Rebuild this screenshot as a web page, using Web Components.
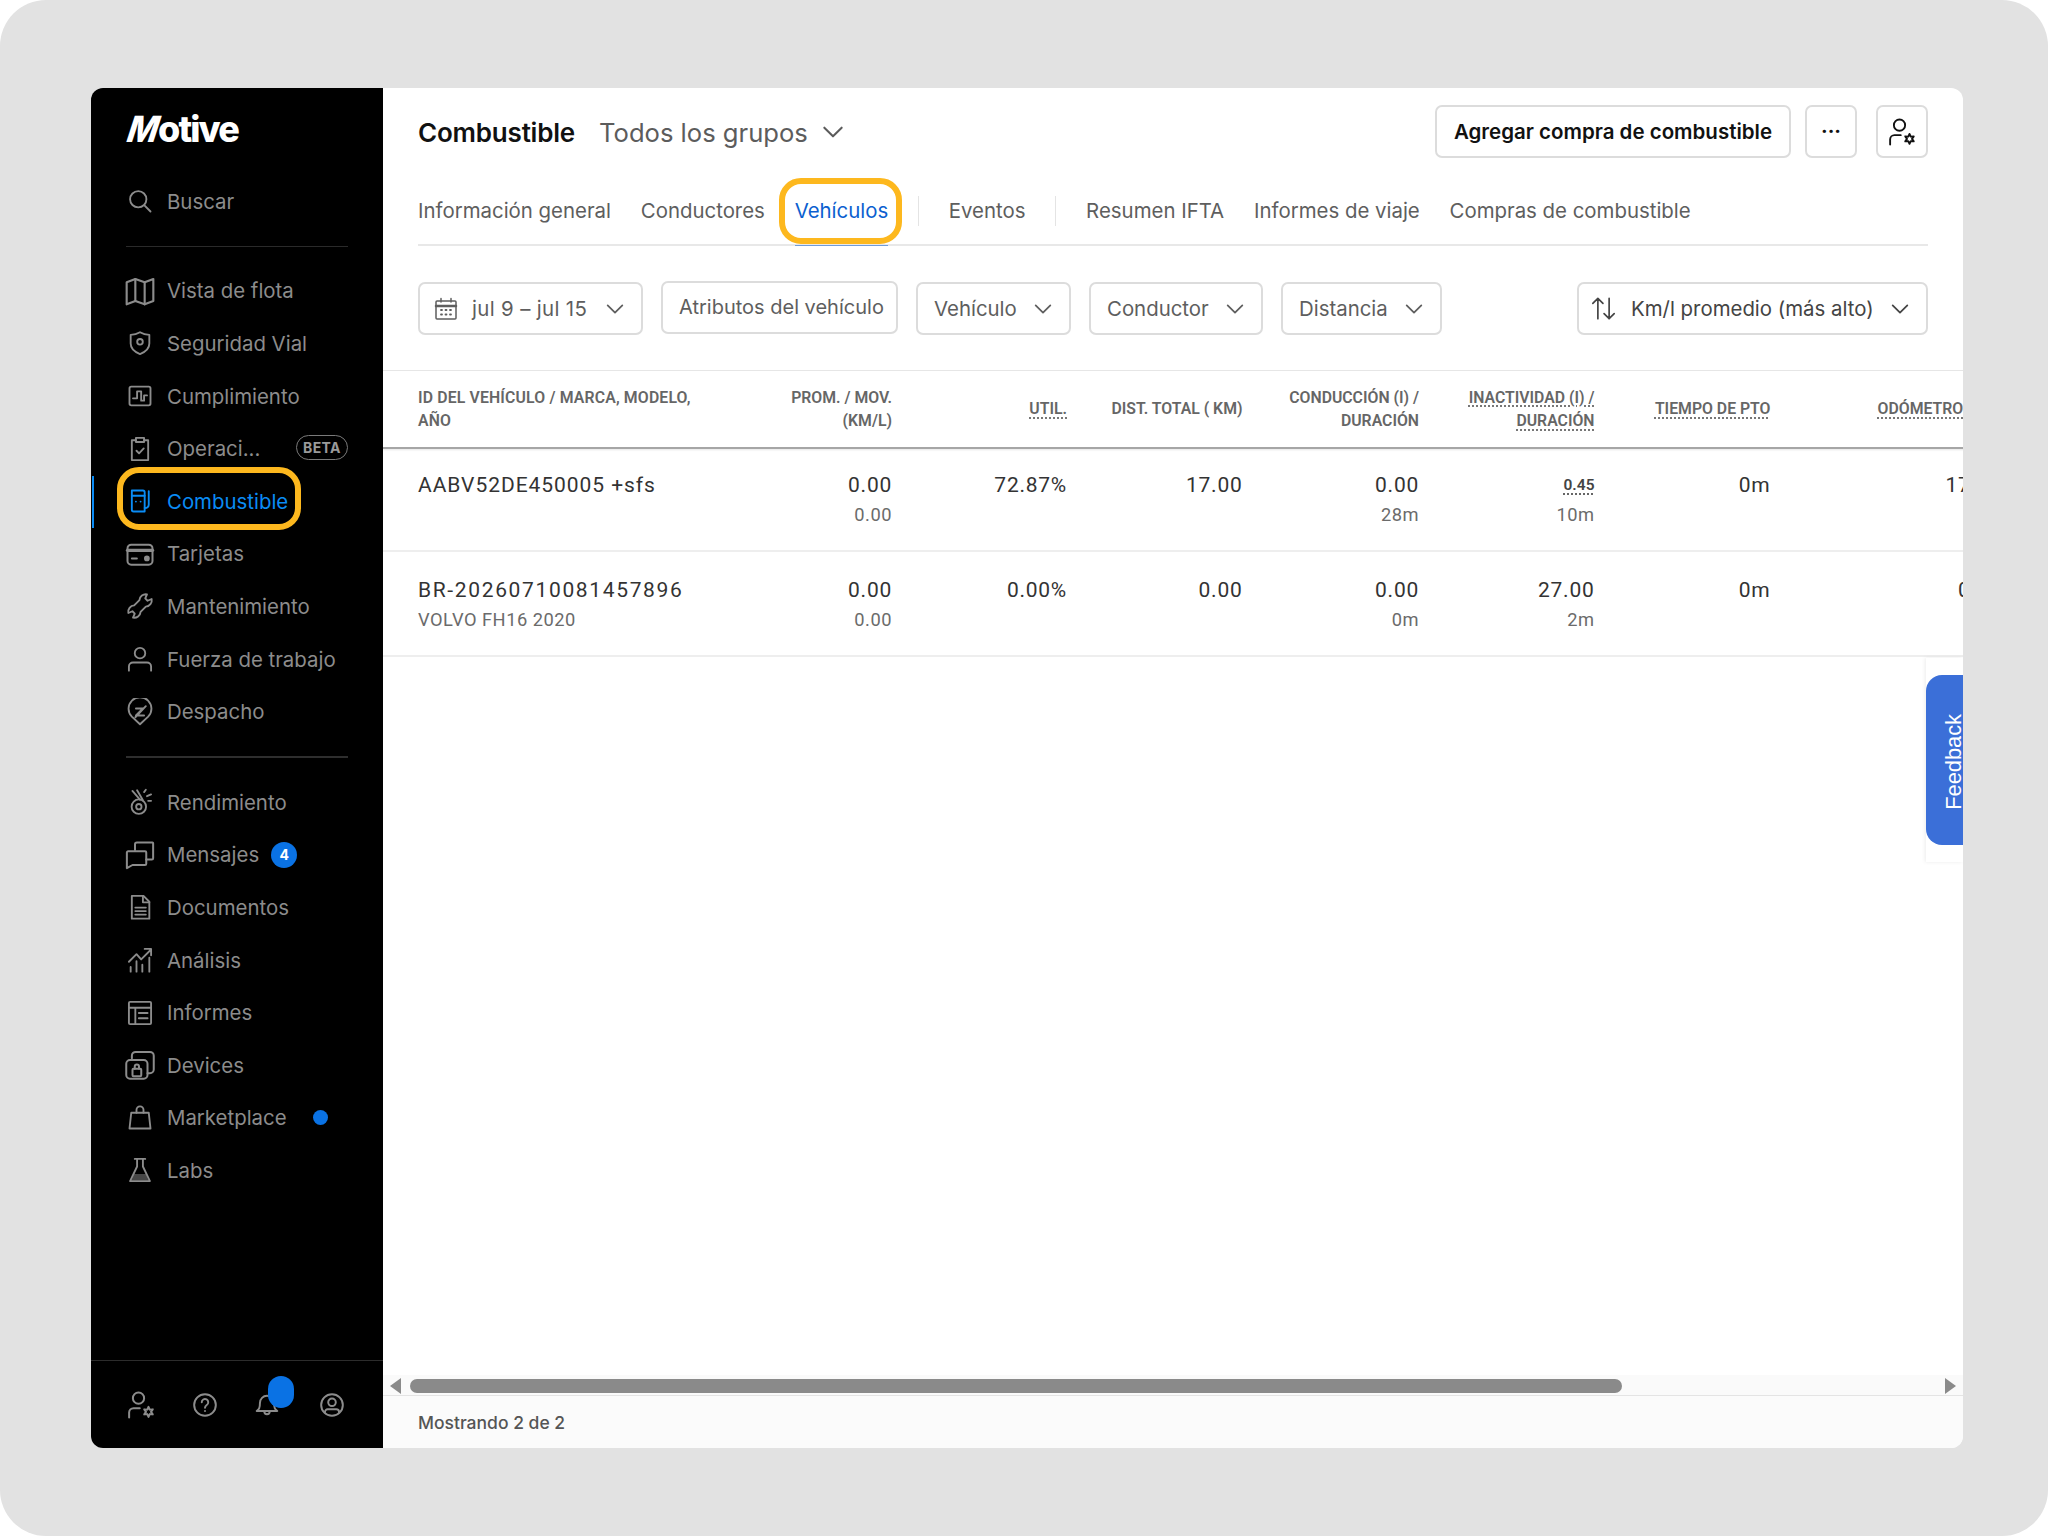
<!DOCTYPE html>
<html lang="es">
<head>
<meta charset="utf-8">
<title>Combustible</title>
<style>
  html, body { margin: 0; padding: 0; background: #fff; }
  body { font-family: Inter, "Liberation Sans", sans-serif; }
</style>
</head>
<body>
<mt-frame>
  <mt-sidebar slot="side">
    <mt-nav-item slot="top" icon="search" label="Buscar"></mt-nav-item>

    <mt-nav-item icon="map" label="Vista de flota" size="32"></mt-nav-item>
    <mt-nav-item icon="shield" label="Seguridad Vial"></mt-nav-item>
    <mt-nav-item icon="compliance" label="Cumplimiento"></mt-nav-item>
    <mt-nav-item icon="clipboard" label="Operaci..."><mt-beta></mt-beta></mt-nav-item>
    <mt-nav-item icon="fuel" label="Combustible" active marked></mt-nav-item>
    <mt-nav-item icon="card" label="Tarjetas" size="30"></mt-nav-item>
    <mt-nav-item icon="wrench" label="Mantenimiento"></mt-nav-item>
    <mt-nav-item icon="person" label="Fuerza de trabajo"></mt-nav-item>
    <mt-nav-item icon="dispatch" label="Despacho"></mt-nav-item>

    <mt-nav-item slot="second" icon="medal" label="Rendimiento"></mt-nav-item>
    <mt-nav-item slot="second" icon="messages" label="Mensajes" size="30"><mt-count>4</mt-count></mt-nav-item>
    <mt-nav-item slot="second" icon="doc" label="Documentos"></mt-nav-item>
    <mt-nav-item slot="second" icon="chart" label="Análisis"></mt-nav-item>
    <mt-nav-item slot="second" icon="report" label="Informes"></mt-nav-item>
    <mt-nav-item slot="second" icon="device" label="Devices" size="30"></mt-nav-item>
    <mt-nav-item slot="second" icon="bag" label="Marketplace"><mt-dot></mt-dot></mt-nav-item>
    <mt-nav-item slot="second" icon="flask" label="Labs"></mt-nav-item>
  </mt-sidebar>

  <mt-main slot="main">
    <mt-header slot="head"></mt-header>
    <mt-tabs slot="head">
      <mt-tab>Información general</mt-tab>
      <mt-tab>Conductores</mt-tab>
      <mt-tab active>Vehículos</mt-tab>
      <mt-sep></mt-sep>
      <mt-tab>Eventos</mt-tab>
      <mt-sep></mt-sep>
      <mt-tab>Resumen IFTA</mt-tab>
      <mt-tab>Informes de viaje</mt-tab>
      <mt-tab>Compras de combustible</mt-tab>
    </mt-tabs>
    <mt-filters slot="head">
      <mt-filter icon="calendar" w="225" spacing=".35">jul 9 – jul 15</mt-filter>
      <mt-filter plain w="237">Atributos del vehículo</mt-filter>
      <mt-filter w="155">Vehículo</mt-filter>
      <mt-filter w="174">Conductor</mt-filter>
      <mt-filter w="161">Distancia</mt-filter>
      <mt-filter class="sort" icon="sort" w="351" dark>Km/l promedio (más alto)</mt-filter>
    </mt-filters>

    <mt-table>
      <mt-row slot="head" head>
        <mt-th left>ID del vehículo / marca, modelo,<br>año</mt-th>
        <mt-th>Prom. / Mov.<br>(km/l)</mt-th>
        <mt-th dotted>Util.</mt-th>
        <mt-th>Dist. Total ( km)</mt-th>
        <mt-th>Conducción (I) /<br>Duración</mt-th>
        <mt-th dotted>Inactividad (I) /<br>Duración</mt-th>
        <mt-th dotted>Tiempo de PTO</mt-th>
        <mt-th dotted>Odómetro (km)</mt-th>
      </mt-row>
      <mt-row first>
        <mt-cell left main="AABV52DE450005 +sfs" spacing=".95"></mt-cell>
        <mt-cell main="0.00" sub="0.00"></mt-cell>
        <mt-cell main="72.87%"></mt-cell>
        <mt-cell main="17.00"></mt-cell>
        <mt-cell main="0.00" sub="28m"></mt-cell>
        <mt-cell main="0.45" sub="10m" small></mt-cell>
        <mt-cell main="0m"></mt-cell>
        <mt-cell main="17.00"></mt-cell>
      </mt-row>
      <mt-row>
        <mt-cell left main="BR-20260710081457896" sub="VOLVO FH16 2020" spacing="1.65"></mt-cell>
        <mt-cell main="0.00" sub="0.00"></mt-cell>
        <mt-cell main="0.00%"></mt-cell>
        <mt-cell main="0.00"></mt-cell>
        <mt-cell main="0.00" sub="0m"></mt-cell>
        <mt-cell main="27.00" sub="2m"></mt-cell>
        <mt-cell main="0m"></mt-cell>
        <mt-cell main="0.00"></mt-cell>
      </mt-row>
      <mt-feedback slot="over"></mt-feedback>
    </mt-table>

    <mt-scrollbar></mt-scrollbar>
    <mt-footer>Mostrando 2 de 2</mt-footer>
  </mt-main>
</mt-frame>

<script>
/**
 * Line icons, all of them on a 24 x 24 grid. Stroke and size come from the element using them.
 */
const ICONS = {
  search: '<circle cx="10.5" cy="10.5" r="7"/><path d="M15.8 15.8 21 21"/>',
  map: '<path d="M2 5.5 8.5 3l7 2.5L22 3v16.5L15.5 22l-7-2.5L2 22z"/><path d="M8.5 3v16.5M15.5 5.500V22"/>',
  shield: '<path d="M12 2.800c2.600 1.600 5.400 2.200 8 2.200v7.500c0 4-3.200 7.200-8 9-4.800-1.800-8-5-8-9V5c2.600 0 5.400-.6 8-2.200z"/><circle cx="12" cy="11" r="2.400"/>',
  compliance: '<rect x="3" y="4" width="18" height="16" rx="1.500"/><path d="M6 14h3.500V8H13v8h2.500v-4.500H18"/>',
  clipboard: '<path d="M8.500 4.500H5v17h14v-17h-3.500"/><rect x="8.500" y="2.500" width="7" height="3.500"/><path d="m9 13.500 2.200 2.200 4-4.200"/>',
  fuel: '<path d="M5 3h9.500a1.500 1.500 0 0 1 1.500 1.500V21H6.500A1.500 1.500 0 0 1 5 19.500z"/><path d="M5 7.500h11M19.500 3.500V15c0 2-1.500 3-3.500 3"/><path d="M8.500 12.500h.01M12.500 12.500h.01"/>',
  card: '<rect x="2" y="4.500" width="20" height="16" rx="3"/><path d="M2 9h20" stroke-width="2.600"/><path d="M5.500 15.500h4"/><circle cx="17.500" cy="15.500" r="1.500" fill="currentColor"/>',
  wrench: '<path d="M18 2l-1.500 3.500 2 2L22 6a5.500 5.500 0 0 1-5 6.500l-4.500 4.500A5.500 5.500 0 0 1 6 22l1.500-3.500-2-2L2 18a5.500 5.500 0 0 1 5-6.500L11.500 7A5.500 5.500 0 0 1 18 2z"/>',
  person: '<circle cx="12" cy="7" r="4.500"/><path d="M2.500 22v-3.500A3.500 3.500 0 0 1 6 15h12a3.500 3.500 0 0 1 3.500 3.500V22"/>',
  dispatch: '<path d="M12 22.500 5 16a9.800 9.800 0 1 1 14 0z"/><path d="M8.500 9h6l-6 6h7M8 16.500 17 7"/>',
  medal: '<circle cx="11" cy="16" r="6.200"/><circle cx="11" cy="16" r="2.300"/><path d="M5.500 2.500 12 10M9.500 2 14.500 10.500M15.500 3.500 17 1.500M18 7l3.500-1.500M19 11h2.500"/>',
  messages: '<path d="M8 8V3.500A1.500 1.500 0 0 1 9.500 2H22a.5.500 0 0 1 .5.500v12a1 1 0 0 1-1 1H17"/><path d="M2.500 9H16a1 1 0 0 1 1 1v9a1 1 0 0 1-1 1H6l-4.500 2.500V10a1 1 0 0 1 1-1z"/>',
  doc: '<path d="M5 2.500h10l5 5v14.500H5z"/><path d="M14.500 2.500v5.500H20M8 12.500h9M8 15.500h9M8 18.500h9"/>',
  chart: '<path d="M2.500 13.500 9 7l4 4.500L21.500 3M16 2.500h5.500V8"/><path d="M4 22v-4M9 22v-9M14 22v-6M20 22V10"/>',
  report: '<rect x="2.500" y="2.500" width="19" height="19" rx="1"/><path d="M2.500 7.500h19M8 7.500v14M11 12h7.500M11 16.500h7.500"/>',
  device: '<path d="M5.500 6.500V4.500a3 3 0 0 1 3-3H20a3 3 0 0 1 3 3v11a3 3 0 0 1-3 3h-2"/><path d="M4 8h11a3 3 0 0 1 3 3v9a3 3 0 0 1-3 3H4a3 3 0 0 1-3-3v-9a3 3 0 0 1 3-3z"/><rect x="6" y="15" width="7" height="6" rx=".8"/><path d="M7.800 15v-1.800a1.700 1.700 0 0 1 3.400 0V15"/>',
  bag: '<path d="M4.500 7.500h15L21 21H3z"/><path d="M9 7.500V5a3 3 0 0 1 6 0v2.500"/>',
  flask: '<path d="M7.500 2.500h9M9.500 2.500v6.500L3.500 21.500h17L14.500 9V2.500"/><path d="M7 15.500h10l2.200 5.500H4.800z" fill="currentColor" stroke="none" opacity=".5"/>',
  usergear: '<circle cx="10" cy="6.500" r="4.500"/><path d="M2.500 22v-4A3.500 3.500 0 0 1 6 14.500h5"/><path d="m18 13.500 1 2.200 2.400-.2-1.400 2 1.400 2-2.400-.2-1 2.200-1-2.200-2.400.2 1.400-2-1.400-2 2.400.2z"/>',
  help: '<circle cx="12" cy="12" r="10"/><path d="M9 9.500a3 3 0 1 1 4.600 2.500c-1 .7-1.600 1.300-1.600 2.500M12 17.500h.01"/>',
  bell: '<path d="M5.500 10a6.500 6.500 0 0 1 13 0c0 5 1 6 3 7.500h-19c2-1.500 3-2.500 3-7.500z"/><path d="M9.500 18a2.500 2.500 0 0 0 5 0"/>',
  account: '<circle cx="12" cy="12" r="10"/><circle cx="12" cy="9.500" r="3.500"/><path d="M5.500 19v-.5A2.500 2.500 0 0 1 8 16h8a2.500 2.500 0 0 1 2.500 2.500v.5"/>',
  calendar: '<rect x="2" y="4" width="20" height="18" rx="1"/><path d="M2 9h20" stroke-width="2.500"/><path d="M7 1.500V5M17 1.500V5"/><path d="M7 13h1M11.500 13h1M16 13h1M7 17.500h1M11.500 17.500h1M16 17.500h1" stroke-width="1.800"/>',
  sort: '<path d="M7 21V3M2.500 7.500 7 3l4.500 4.500M17 3v18M12.500 16.500 17 21l4.500-4.500"/>',
  chevron: '<path d="m4 8 8 8 8-8"/>'
}

/**
 * Builds the markup of an icon.
 *
 * @param {string} name - Key in ICONS.
 * @param {number} size - Width and height in pixels.
 * @param {number} stroke - Stroke width on the 24 unit grid.
 * @returns {string} The svg markup.
 */
function iconMarkup (name, size, stroke) {
  return `<svg width="${size}" height="${size}" viewBox="0 0 24 24" fill="none" stroke="currentColor" stroke-width="${stroke}" stroke-linecap="round" stroke-linejoin="round" style="display:block;flex:none">${ICONS[name]}</svg>`
}

/**
 * Registers an element whose shadow root is only a style and some static markup.
 *
 * @param {string} tag - Name of the element.
 * @param {string} html - Style and markup of the shadow root.
 */
function defineStatic (tag, html) {
  customElements.define(tag, class extends HTMLElement {
    constructor () {
      super()
      this.attachShadow({ mode: 'open' }).innerHTML = html
    }
  })
}

defineStatic('mt-frame', `
  <style>
    :host {
      display: flex;
      box-sizing: border-box;
      width: 2048px;
      height: 1536px;
      padding: 88px 85px 88px 91px;
      background: #e2e2e2;
      border-radius: 46px;
    }
    #window {
      display: flex;
      flex: 1;
      min-width: 0;
      background: #fff;
      border-radius: 12px;
      overflow: hidden;
    }
  </style>
  <div id="window"><slot name="side"></slot><slot name="main"></slot></div>
`)

customElements.define('mt-sidebar', class extends HTMLElement {
  constructor () {
    super()
    const footIcons = ['usergear', 'help', 'bell', 'account']
      .map(name => `<span class="foot-icon ${name}">${iconMarkup(name, name === 'usergear' ? 30 : 26, name === 'usergear' ? 1.6 : 1.8)}</span>`)
      .join('')
    this.attachShadow({ mode: 'open' }).innerHTML = `
      <style>
        :host {
          display: flex;
          flex-direction: column;
          flex: none;
          width: 292px;
          background: #000;
        }
        #brand {
          height: 87px;
          box-sizing: border-box;
          padding: 18px 0 0 33px;
          color: #fff;
          font: 800 36px/46px Inter, sans-serif;
          letter-spacing: -1.9px;
          white-space: nowrap;
        }
        #brand span {
          display: inline-block;
          transform: skewX(-18deg) scaleX(.9);
          transform-origin: 0 82%;
          margin-right: 2px;
        }
        .rule {
          height: 2px;
          margin: 18px 35px;
          background: #2e2e2e;
        }
        .rule.thin { height: 1px; background: #2a2a2a; }
        #spacer { flex: 1; }
        #foot {
          height: 88px;
          box-sizing: border-box;
          border-top: 1px solid #2c2c2c;
          position: relative;
          color: #8c8c8c;
        }
        .foot-icon { position: absolute; top: 31px; }
        .usergear { left: 35px; top: 29px; }
        .help { left: 101px; }
        .bell { left: 163px; }
        .account { left: 228px; }
        #blob {
          position: absolute;
          left: 177px;
          top: 15px;
          width: 26px;
          height: 32px;
          border-radius: 13px;
          background: #0a72e4;
        }
      </style>
      <div id="brand"><span>M</span>otive</div>
      <slot name="top"></slot>
      <div class="rule thin"></div>
      <slot></slot>
      <div class="rule"></div>
      <slot name="second"></slot>
      <div id="spacer"></div>
      <div id="foot">${footIcons}<div id="blob"></div></div>
    `
  }
})

customElements.define('mt-nav-item', class extends HTMLElement {
  constructor () {
    super()
    this.attachShadow({ mode: 'open' })
  }

  connectedCallback () {
    const active = this.hasAttribute('active')
    const marked = this.hasAttribute('marked')
    const size = Number(this.getAttribute('size')) || 28
    this.shadowRoot.innerHTML = `
      <style>
        :host {
          display: flex;
          align-items: center;
          position: relative;
          box-sizing: border-box;
          height: 52.6px;
          padding-left: 33px;
          color: ${active ? '#0a8cf5' : '#8c8c8c'};
          font: 400 20.400px Inter, sans-serif;
        }
        #icon { width: 32px; display: flex; justify-content: center; margin-right: 11px; flex: none; }
        #bar { position: absolute; left: 1px; top: 1px; bottom: 0; width: 2px; background: #0a8cf5; }
        #mark {
          position: absolute;
          left: 26px;
          top: -8px;
          width: 184px;
          height: 63px;
          box-sizing: border-box;
          border: 6px solid #fdb81e;
          border-radius: 22px;
        }
      </style>
      ${active ? '<div id="bar"></div>' : ''}
      <span id="icon">${iconMarkup(this.getAttribute('icon'), size, 1.6)}</span>
      <span>${this.getAttribute('label')}</span>
      <slot></slot>
      ${marked ? '<div id="mark"></div>' : ''}
    `
  }
})

defineStatic('mt-beta', `
  <style>
    :host {
      position: absolute;
      left: 205px;
      top: 13px;
      width: 52px;
      height: 25px;
      box-sizing: border-box;
      display: flex;
      align-items: center;
      justify-content: center;
      border: 1.500px solid #7a7a7a;
      border-radius: 13px;
      color: #9a9a9a;
      font: 700 14px Inter, sans-serif;
      letter-spacing: .4px;
    }
  </style>
  <span>BETA</span>
`)

defineStatic('mt-count', `
  <style>
    :host {
      display: flex;
      align-items: center;
      justify-content: center;
      width: 26px;
      height: 26px;
      margin-left: 12px;
      border-radius: 50%;
      background: #0a72e4;
      color: #fff;
      font: 700 14px Inter, sans-serif;
    }
  </style>
  <slot></slot>
`)

defineStatic('mt-dot', `
  <style>
    :host {
      display: block;
      width: 15px;
      height: 15px;
      margin-left: 26px;
      border-radius: 50%;
      background: #0a72e4;
    }
  </style>
`)

defineStatic('mt-main', `
  <style>
    :host {
      display: flex;
      flex-direction: column;
      flex: 1;
      min-width: 0;
    }
    #head { padding: 17px 35px 0; }
  </style>
  <div id="head"><slot name="head"></slot></div>
  <slot></slot>
`)

customElements.define('mt-header', class extends HTMLElement {
  constructor () {
    super()
    this.attachShadow({ mode: 'open' }).innerHTML = `
      <style>
        :host {
          display: flex;
          align-items: center;
          height: 53px;
        }
        #title { font: 600 26px Inter, sans-serif; color: #111; letter-spacing: -.2px; padding-top: 1px; }
        #group { margin-left: 24px; font: 400 25.600px Inter, sans-serif; color: #5c5c5c; padding-top: 1px; }
        #chev { margin-left: 12px; color: #5c5c5c; }
        .btn {
          display: flex;
          align-items: center;
          justify-content: center;
          box-sizing: border-box;
          height: 53px;
          border: 2px solid #dcdcdc;
          border-radius: 7px;
          color: #111;
        }
        #add { margin-left: auto; width: 356px; font: 600 20.500px Inter, sans-serif; }
        #more { margin-left: 14px; width: 52px; font: 700 20px Inter, sans-serif; padding-bottom: 2px; }
        #user { margin-left: 19px; width: 52px; }
      </style>
      <span id="title">Combustible</span>
      <span id="group">Todos los grupos</span>
      <span id="chev">${iconMarkup('chevron', 26, 1.9)}</span>
      <div class="btn" id="add">Agregar compra de combustible</div>
      <div class="btn" id="more">···</div>
      <div class="btn" id="user">${iconMarkup('usergear', 30, 1.5)}</div>
    `
  }
})

defineStatic('mt-tabs', `
  <style>
    :host {
      display: flex;
      align-items: center;
      gap: 29.800px;
      height: 88px;
      box-sizing: border-box;
      padding-top: 20px;
      border-bottom: 2px solid #e8e8e8;
    }
  </style>
  <slot></slot>
`)

customElements.define('mt-tab', class extends HTMLElement {
  constructor () {
    super()
    this.attachShadow({ mode: 'open' })
  }

  connectedCallback () {
    const active = this.hasAttribute('active')
    this.shadowRoot.innerHTML = `
      <style>
        :host {
          display: block;
          position: relative;
          font: 400 20.400px/26px Inter, sans-serif;
          color: ${active ? '#0b5fd0' : '#5e5e5e'};
        }
        #line { position: absolute; left: 0; right: 0; bottom: -22px; height: 1px; background: #6f9bd8; }
        #mark {
          position: absolute;
          left: -16px;
          right: -14px;
          top: -20px;
          bottom: -20px;
          border: 6px solid #fdb81e;
          border-radius: 22px;
        }
      </style>
      <slot></slot>
      ${active ? '<div id="line"></div><div id="mark"></div>' : ''}
    `
  }
})

defineStatic('mt-sep', `
  <style>
    :host { display: block; width: 1px; height: 30px; background: #e4e4e4; }
  </style>
`)

defineStatic('mt-filters', `
  <style>
    :host {
      display: flex;
      gap: 18px;
      margin-top: 36px;
      height: 53px;
      margin-bottom: 35px;
    }
    ::slotted(.sort) { margin-left: auto; }
  </style>
  <slot></slot>
`)

customElements.define('mt-filter', class extends HTMLElement {
  constructor () {
    super()
    this.attachShadow({ mode: 'open' })
  }

  connectedCallback () {
    const icon = this.getAttribute('icon')
    const plain = this.hasAttribute('plain')
    const small = icon === 'calendar' ? 24 : 27
    this.shadowRoot.innerHTML = `
      <style>
        :host {
          display: flex;
          align-items: center;
          gap: 14px;
          box-sizing: border-box;
          width: ${this.getAttribute('w')}px;
          height: 53px;
          padding: 0 15px 0 ${icon === 'sort' ? 11 : icon ? 14 : 16}px;
          border: 2px solid #dcdcdc;
          border-radius: 7px;
          color: ${this.hasAttribute('dark') ? '#444' : '#5e5e5e'};
          font: 400 ${plain ? 20 : 20.4}px Inter, sans-serif;
          letter-spacing: ${this.getAttribute('spacing') || 0}px;
          white-space: nowrap;
          ${plain ? 'transform: translateY(-1px);' : ''}
        }
        #text { flex: 1; ${plain ? 'margin-bottom: 2px;' : ''} }
      </style>
      ${icon ? iconMarkup(icon, small, 1.5) : ''}
      <span id="text"><slot></slot></span>
      ${plain ? '' : iconMarkup('chevron', 22, 1.9)}
    `
  }
})

defineStatic('mt-table', `
  <style>
    :host {
      display: block;
      position: relative;
      flex: 1;
      min-height: 0;
      overflow: hidden;
      --cols: 334px 175px 175px 175.500px 176.500px 175.500px 176px 231.500px;
      --body-font: Roboto, "Liberation Sans", sans-serif;
    }
  </style>
  <slot name="head"></slot>
  <slot></slot>
  <slot name="over"></slot>
`)

customElements.define('mt-row', class extends HTMLElement {
  constructor () {
    super()
    this.attachShadow({ mode: 'open' })
  }

  connectedCallback () {
    const head = this.hasAttribute('head')
    const first = this.hasAttribute('first')
    this.shadowRoot.innerHTML = `
      <style>
        :host {
          display: grid;
          grid-template-columns: var(--cols);
          box-sizing: border-box;
          width: 1797px;
          height: ${head ? 79 : first ? 103 : 105}px;
          padding-top: ${head || first ? 0 : 2}px;
          border-top: ${head ? '1px solid #e6e6e6' : '0'};
          border-bottom: 2px solid ${head ? '#a6a6a6' : '#eeeeee'};
          ${head ? 'align-items: center; box-shadow: 0 1px 2px rgba(0,0,0,.1);' : ''}
        }
      </style>
      <slot></slot>
    `
  }
})

customElements.define('mt-th', class extends HTMLElement {
  constructor () {
    super()
    this.attachShadow({ mode: 'open' })
  }

  connectedCallback () {
    const left = this.hasAttribute('left')
    this.shadowRoot.innerHTML = `
      <style>
        :host {
          display: block;
          box-sizing: border-box;
          padding: ${left ? '0 0 0 35px' : '0'};
          text-align: ${left ? 'left' : 'right'};
          font: 600 15.800px/23.500px var(--body-font);
          letter-spacing: ${left ? 0.16 : 0}px;
          color: #666;
          text-transform: uppercase;
          white-space: nowrap;
        }
        span {
          ${this.hasAttribute('dotted') ? 'text-decoration: underline dotted #777 1.500px; text-underline-offset: 3px;' : ''}
        }
      </style>
      <span><slot></slot></span>
    `
  }
})

customElements.define('mt-cell', class extends HTMLElement {
  constructor () {
    super()
    this.attachShadow({ mode: 'open' })
  }

  connectedCallback () {
    const left = this.hasAttribute('left')
    const sub = this.getAttribute('sub')
    this.shadowRoot.innerHTML = `
      <style>
        :host {
          display: block;
          padding: ${left ? '23px 0 0 35px' : '23px 0 0'};
          text-align: ${left ? 'left' : 'right'};
          font-family: var(--body-font);
          white-space: nowrap;
        }
        #main { font-size: 21px; line-height: 26px; color: #333; letter-spacing: ${this.getAttribute('spacing') || 0.75}px; }
        #main.small {
          font-size: 15.500px;
          font-weight: 600;
          letter-spacing: 0;
          color: #444;
          vertical-align: -2px;
          text-decoration: underline dotted #666 1.500px;
          text-underline-offset: 3px;
        }
        #sub { font-size: 18.300px; line-height: 24px; margin-top: 5px; color: #6b6b6b; letter-spacing: .5px; }
      </style>
      <div><span id="main" class="${this.hasAttribute('small') ? 'small' : ''}">${this.getAttribute('main')}</span></div>
      ${sub ? `<div id="sub">${sub}</div>` : ''}
    `
  }
})

defineStatic('mt-feedback', `
  <style>
    :host {
      position: absolute;
      right: 0;
      top: 288px;
      width: 37px;
      height: 204px;
      background: #fff;
      box-shadow: -1px 0 4px rgba(0,0,0,.08);
    }
    #tab {
      position: absolute;
      left: 0;
      top: 17px;
      width: 60px;
      height: 170px;
      background: #3b6fd8;
      border-radius: 16px 0 0 16px;
      overflow: hidden;
    }
    #label {
      position: absolute;
      left: 16px;
      top: 39px;
      writing-mode: vertical-rl;
      transform: rotate(180deg);
      color: #fff;
      font: 400 21.800px/24px "Liberation Sans", sans-serif;
    }
    #clip { position: absolute; inset: 0; overflow: hidden; }
  </style>
  <div id="clip"><div id="tab"><span id="label">Feedback</span></div></div>
`)

defineStatic('mt-scrollbar', `
  <style>
    :host {
      display: flex;
      align-items: center;
      box-sizing: border-box;
      flex: none;
      height: 20px;
      padding: 2px 7px 0;
      background: #fafafa;
    }
    .arrow { width: 0; height: 0; border-top: 8px solid transparent; border-bottom: 8px solid transparent; }
    #left { border-right: 11px solid #8a8a8a; }
    #right { border-left: 11px solid #8a8a8a; margin-left: auto; }
    #thumb { width: 1212px; height: 14px; margin-left: 9px; border-radius: 7px; background: #8a8a8a; }
  </style>
  <div class="arrow" id="left"></div>
  <div id="thumb"></div>
  <div class="arrow" id="right"></div>
`)

defineStatic('mt-footer', `
  <style>
    :host {
      display: flex;
      align-items: center;
      flex: none;
      box-sizing: border-box;
      height: 53px;
      padding-left: 35px;
      border-top: 1px solid #e4e4e4;
      background: #fbfbfb;
      color: #555;
      font: 500 17.500px Inter, sans-serif;
    }
  </style>
  <slot></slot>
`)
</script>
</body>
</html>
